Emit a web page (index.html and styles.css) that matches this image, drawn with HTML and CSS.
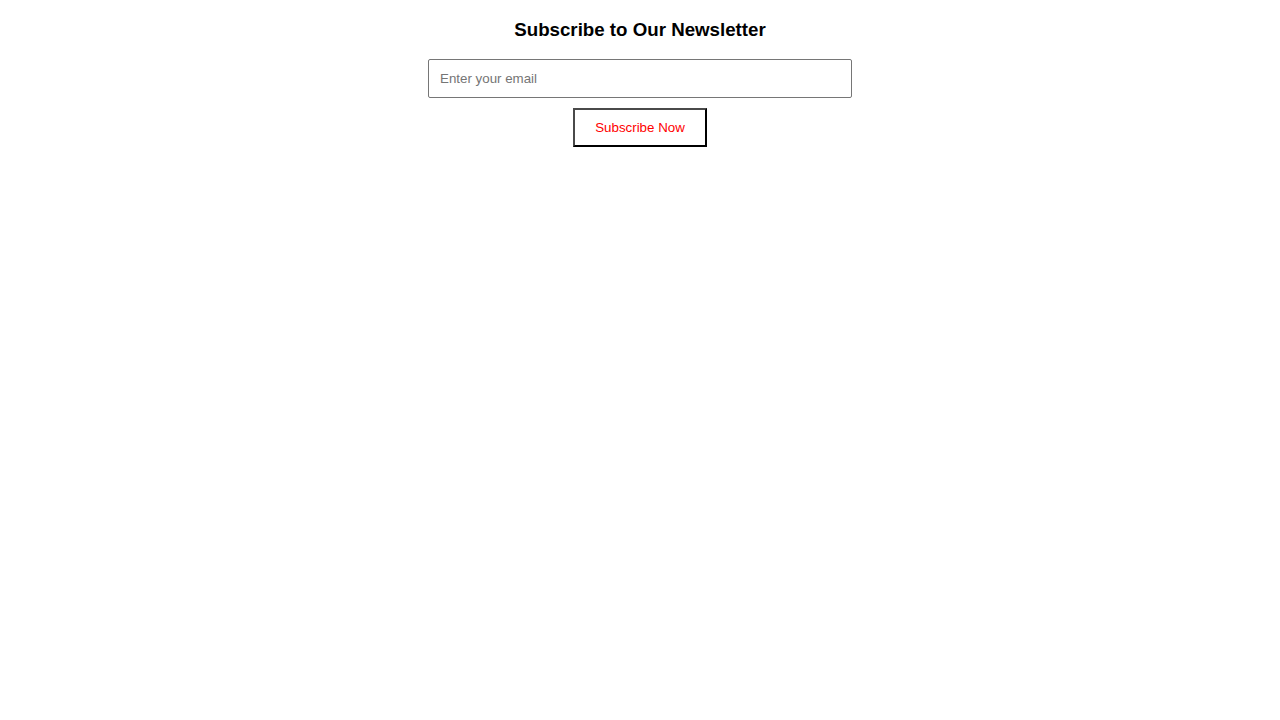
FILE: index.html
```html
<!DOCTYPE html>
<html lang="en">
<head>
<meta charset="utf-8">
<title>Newsletter</title>
<link rel="stylesheet" href="styles.css">
</head>
<body>
<section class="newsletter">
  <h3 class="newsletter-title">Subscribe to Our Newsletter</h3>
  <form class="newsletter-form">
    <input class="email-input" type="email" placeholder="Enter your email">
    <button class="subscribe-btn" type="button">Subscribe Now</button>
  </form>
</section>
</body>
</html>
```
FILE: styles.css
```css
html, body {
  margin: 0;
  padding: 0;
  background: #ffffff;
}

body {
  font-family: "Liberation Sans", Arial, sans-serif;
}

.newsletter {
  display: flex;
  flex-direction: column;
  align-items: center;
}

.newsletter-title {
  font-size: 18.72px;
  font-weight: bold;
  color: #000;
  margin: 18.72px 0;
  line-height: normal;
}

.newsletter-form {
  display: flex;
  flex-direction: column;
  align-items: center;
  gap: 10px;
  margin: 0;
}

.email-input {
  box-sizing: border-box;
  width: 424px;
  height: 39px;
  padding: 0 10px 0 11px;
  border: 1px solid #767676;
  border-radius: 2px;
  font-family: "Liberation Sans", Arial, sans-serif;
  font-size: 13.33px;
  color: #000;
  background: #fff;
}

.email-input::placeholder {
  color: #757575;
}

.subscribe-btn {
  box-sizing: border-box;
  height: 39px;
  padding: 0 20px;
  border-width: 2px;
  border-style: solid;
  border-top-color: #4a4a4a;
  border-left-color: #4a4a4a;
  border-right-color: #000;
  border-bottom-color: #000;
  background: #fff;
  color: #ff0000;
  font-family: "Liberation Sans", Arial, sans-serif;
  font-size: 13.33px;
  cursor: pointer;
}
```
